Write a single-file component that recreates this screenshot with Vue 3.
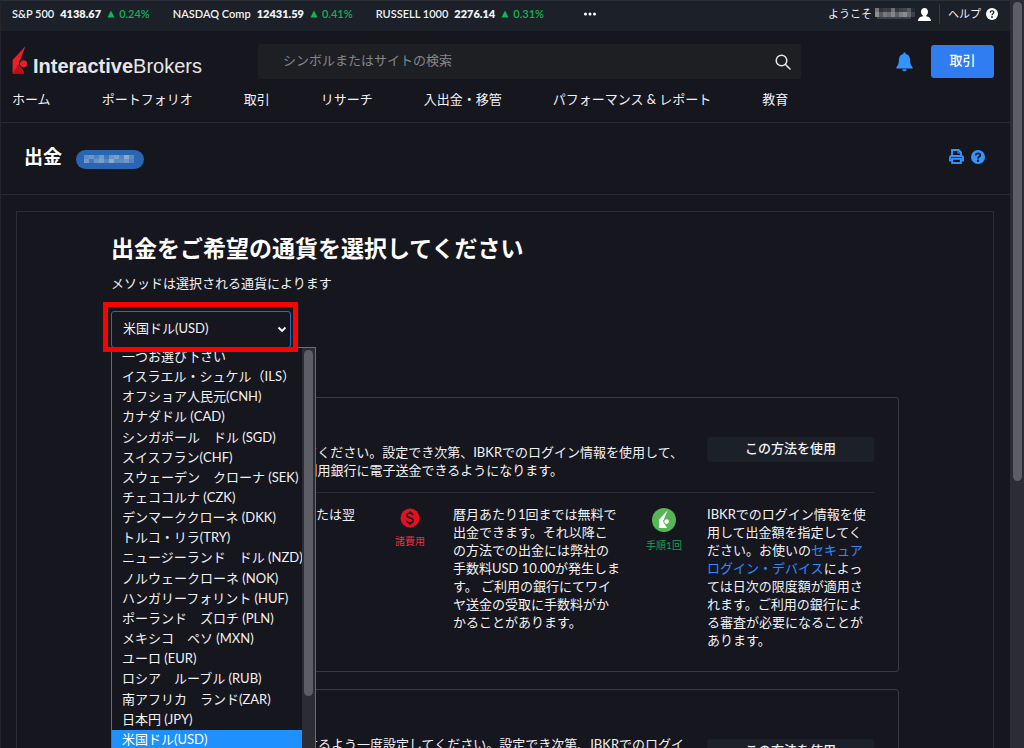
<script setup>
import { ref } from 'vue'

const tickers = [
  { name: 'S&P 500', value: '4138.67', change: '0.24%' },
  { name: 'NASDAQ Comp', value: '12431.59', change: '0.41%' },
  { name: 'RUSSELL 1000', value: '2276.14', change: '0.31%' },
]

const menu = ['ホーム', 'ポートフォリオ', '取引', 'リサーチ', '入出金・移管', 'パフォーマンス & レポート', '教育']

const currencies = [
  '一つお選び下さい',
  'イスラエル・シュケル（ILS）',
  'オフショア人民元(CNH)',
  'カナダドル (CAD)',
  'シンガポール　ドル (SGD)',
  'スイスフラン(CHF)',
  'スウェーデン　クローナ (SEK)',
  'チェココルナ (CZK)',
  'デンマーククローネ (DKK)',
  'トルコ・リラ(TRY)',
  'ニュージーランド　ドル (NZD)',
  'ノルウェークローネ (NOK)',
  'ハンガリーフォリント (HUF)',
  'ポーランド　ズロチ (PLN)',
  'メキシコ　ペソ (MXN)',
  'ユーロ (EUR)',
  'ロシア　ルーブル (RUB)',
  '南アフリカ　ランド(ZAR)',
  '日本円 (JPY)',
  '米国ドル(USD)',
]

const selected = ref('米国ドル(USD)')

const nameShades = ['#8d8d8f', '#55585e', '#77787c', '#6a6c72', '#84868a', '#5c5f66', '#7d7e83', '#8a8b90', '#666970', '#3c4048']
const pillShades = ['#5d8cc6', '#6f97c9', '#4f82c2', '#7398c6', '#3f77bd', '#6a93c8', '#7e9fc8', '#5686c3', '#8ea9cb', '#6089c0']
</script>

<template>
  <div class="page">
    <div class="content">
      <div class="topbar">
        <div class="tickers">
          <div v-for="t in tickers" :key="t.name" class="ticker">
            <span>{{ t.name }}</span>
            <b>{{ t.value }}</b>
            <span class="up">
              <svg width="8" height="8" viewBox="0 0 8 8" aria-hidden="true"><path d="M4 0.5 L7.6 7.5 H0.4 Z" fill="#12b455" /></svg>
              {{ t.change }}
            </span>
          </div>
          <button class="plain more" aria-label="その他">
            <svg width="14" height="4" viewBox="0 0 14 4"><g fill="#fff"><circle cx="2.5" cy="2" r="1.5" /><circle cx="7" cy="2" r="1.5" /><circle cx="11.5" cy="2" r="1.5" /></g></svg>
          </button>
        </div>
        <div class="user">
          <button class="plain welcome">
            <span>ようこそ</span>
            <svg width="40" height="12" viewBox="0 0 40 12" aria-hidden="true">
              <rect v-for="(c, i) in nameShades" :key="i" :x="i * 4" y="4" width="4" height="5" :fill="c" />
              <rect v-for="(c, i) in nameShades" :key="'t' + i" :x="i * 4" y="0" width="4" height="4" :fill="c" :opacity="i % 4 === 0 ? 0.8 : 0.35" />
              <rect x="2" y="9" width="34" height="2" fill="#3c4048" />
            </svg>
            <svg width="13" height="13" viewBox="0 0 13 13" aria-hidden="true"><path fill="#fff" d="M6.5 0 C8.6 0 10 1.6 10 3.7 C10 5.3 9.2 6.8 8.1 7.5 V8.3 C10.6 8.8 12.8 9.8 13 13 H0 C0.2 9.8 2.4 8.8 4.9 8.3 V7.5 C3.8 6.8 3 5.3 3 3.7 C3 1.6 4.4 0 6.5 0 Z" /></svg>
          </button>
          <a class="help" href="#">
            <span>ヘルプ</span>
            <svg width="12" height="12" viewBox="0 0 12 12" aria-hidden="true"><circle cx="6" cy="6" r="6" fill="#fff" /><path d="M4.2 4.6 C4.3 2.3 7.9 2.4 7.8 4.5 C7.7 5.7 6.1 5.7 6 7.2" fill="none" stroke="#1b2029" stroke-width="1.3" /><circle cx="6" cy="9" r="0.9" fill="#1b2029" /></svg>
          </a>
        </div>
      </div>

      <header class="header">
        <div class="head-row">
          <a class="logo" href="#" aria-label="InteractiveBrokers">
            <svg width="16" height="28" viewBox="0 0 16 28" aria-hidden="true">
              <path d="M13.5 0 L0.6 14 V27.5 H12.4 L7 17 Z" fill="#e8202c" />
              <path d="M0.6 27.5 L7 17 L12.4 27.5 Z" fill="#bd0f1a" />
              <circle cx="11.6" cy="17.8" r="4.6" fill="#16161e" />
              <circle cx="11.6" cy="17.8" r="3.5" fill="#e8202c" />
            </svg>
            <span><b>Interactive</b>Brokers</span>
          </a>
          <form class="search" role="search" @submit.prevent>
            <input type="text" aria-label="シンボルまたはサイトの検索" placeholder="シンボルまたはサイトの検索" />
            <button class="plain" aria-label="検索">
              <svg width="16" height="16" viewBox="0 0 16 16"><circle cx="6.5" cy="6.5" r="5.3" fill="none" stroke="#e4e4e6" stroke-width="1.5" /><path d="M10.5 10.5 L15 15" stroke="#e4e4e6" stroke-width="1.6" stroke-linecap="round" /></svg>
            </button>
          </form>
          <div class="actions">
            <button class="plain bell" aria-label="通知">
              <svg width="17" height="20" viewBox="0 0 17 20"><path fill="#3394ff" d="M8.5 0.5 C9.3 0.5 9.7 1 9.7 1.9 C12.8 2.6 14 4.8 14.1 8 C14.2 11.6 14.8 13.4 16.6 15.3 V16.4 H0.4 V15.3 C2.2 13.4 2.8 11.6 2.9 8 C3 4.8 4.2 2.6 7.3 1.9 C7.3 1 7.7 0.5 8.5 0.5 Z M6.2 17.2 H10.8 C10.6 18.6 9.7 19.3 8.5 19.3 C7.3 19.3 6.4 18.6 6.2 17.2 Z" /></svg>
            </button>
            <button class="trade">取引</button>
          </div>
        </div>
        <nav class="nav">
          <a v-for="m in menu" :key="m" href="#">{{ m }}</a>
        </nav>
      </header>

      <div class="titlebar">
        <h1>出金</h1>
        <span class="pill">
          <svg width="52" height="8" viewBox="0 0 52 8" aria-hidden="true">
            <rect v-for="(c, i) in pillShades" :key="i" :x="i * 5" y="0" width="5" height="4" :fill="c" />
            <rect v-for="(c, i) in pillShades" :key="'b' + i" :x="i * 5" y="4" width="5" height="4" :fill="pillShades[(i + 3) % 10]" />
          </svg>
        </span>
        <div class="tools">
          <button class="plain" aria-label="印刷">
            <svg width="15" height="15" viewBox="0 0 15 15"><g fill="none" stroke="#3394ff" stroke-width="1.9"><path d="M3 7 V1 H9.6 L12 3.4 V7" /><path d="M3.2 11.5 H1 V8.6 Q1 7 2.6 7 H12.4 Q14 7 14 8.6 V11.5 H11.8" /><rect x="3.2" y="9.8" width="8.6" height="4.2" /></g><path d="M9 1 V4 H12" fill="none" stroke="#3394ff" stroke-width="1.2" /></svg>
          </button>
          <button class="plain" aria-label="ヘルプ">
            <svg width="14" height="14" viewBox="0 0 14 14"><circle cx="7" cy="7" r="7" fill="#3394ff" /><path d="M4.7 5.4 C4.9 2.6 9.4 2.7 9.3 5.3 C9.2 6.9 7.1 6.8 7 8.5" fill="none" stroke="#16161e" stroke-width="1.8" /><circle cx="7" cy="10.7" r="1.2" fill="#16161e" /></svg>
          </button>
        </div>
      </div>

      <main class="panel">
        <div class="inner">
          <h2>出金をご希望の通貨を選択してください</h2>
          <label for="currency">メソッドは選択される通貨によります</label>
          <div class="picker">
            <select id="currency" v-model="selected">
              <option v-for="c in currencies" :key="c">{{ c }}</option>
            </select>
            <svg class="chevron" width="10" height="7" viewBox="0 0 10 7" aria-hidden="true"><path d="M1.5 1.5 L5 5 L8.5 1.5" fill="none" stroke="#fff" stroke-width="1.8" /></svg>
            <div class="popup">
              <ul role="listbox" aria-label="通貨">
                <li v-for="c in currencies" :key="c" role="option" :aria-selected="c === selected" :class="{ on: c === selected }" @click="selected = c">{{ c }}</li>
              </ul>
              <div class="popup-track"><div class="popup-thumb"></div></div>
            </div>
            <div class="highlight"></div>
          </div>

          <section class="card">
            <div class="card-head">
              <p>銀行の口座情報を一度設定してください。設定でき次第、IBKRでのログイン情報を使用して、<br />弊社の取引口座からすぐにご利用銀行に電子送金できるようになります。</p>
              <button class="use">この方法を使用</button>
            </div>
            <div class="facts">
              <div class="fact">
                <div class="badge blue">
                  <svg width="20" height="20" viewBox="0 0 20 20" aria-hidden="true"><circle cx="10" cy="10" r="10" fill="#2f7df0" /><path d="M10 4 V10 L14 12" fill="none" stroke="#16161e" stroke-width="2" /></svg>
                  <span>到着</span>
                </div>
                <p>ご依頼から当日中または翌営業日の送金。</p>
              </div>
              <div class="fact">
                <div class="badge red">
                  <svg width="20" height="20" viewBox="0 0 20 20" aria-hidden="true"><circle cx="10" cy="10" r="9.5" fill="#e5101f" /><path d="M13 7 C12.5 5.6 11.4 5.1 10 5.1 C8.2 5.1 7 6 7 7.4 C7 10.6 13.2 9.2 13.2 12.5 C13.2 14 11.8 14.9 10 14.9 C8.3 14.9 7.1 14.2 6.7 12.7 M10 3.2 V5.2 M10 14.8 V16.8" fill="none" stroke="#16161e" stroke-width="1.7" /></svg>
                  <span>諸費用</span>
                </div>
                <p class="fees">暦月あたり1回までは無料で<br />出金できます。それ以降こ<br />の方法での出金には弊社の<br />手数料USD 10.00が発生しま<br />す。 ご利用の銀行にてワイ<br />ヤ送金の受取に手数料がか<br />かることがあります。</p>
              </div>
              <div class="fact">
                <div class="badge green">
                  <svg width="24" height="24" viewBox="0 0 24 24" aria-hidden="true"><circle cx="12" cy="12" r="12" fill="#56b656" /><path d="M15.6 2.2 L7.2 11.5 V20 H15 L11.2 13 Z" fill="#fff" /><circle cx="14.6" cy="13.6" r="3.1" fill="#56b656" /><circle cx="14.6" cy="13.6" r="2.3" fill="#fff" /></svg>
                  <span>手順1回</span>
                </div>
                <p>IBKRでのログイン情報を使用して出金額を指定してください。お使いの<a href="#">セキュアログイン・デバイス</a>によっては日次の限度額が適用されます。ご利用の銀行による審査が必要になることがあります。</p>
              </div>
            </div>
          </section>

          <section class="card lower">
            <div class="card-head">
              <p>お客様の銀行口座へ直接送金するよう一度設定してください。設定でき次第、IBKRでのログイ<br />ン情報を使用して電子送金できるようになります。</p>
              <button class="use">この方法を使用</button>
            </div>
          </section>
        </div>
      </main>
    </div>
    <div class="track"><div class="thumb"></div></div>
  </div>
</template>

<style>
html,
body {
  margin: 0;
  background: #16161e;
}
</style>

<style scoped>
* {
  box-sizing: border-box;
}

.page {
  display: flex;
  height: 100vh;
  overflow: hidden;
  background: #16161e;
  color: #f2f2f4;
  font-family: Lato, "Noto Sans CJK JP", sans-serif;
  font-size: 13px;
  line-height: 18px;
}

.content {
  flex: 1;
  min-width: 0;
  border-left: 1px solid #24242c;
}

button,
input,
select {
  font: inherit;
  color: inherit;
}

p,
h1,
h2,
ul {
  margin: 0;
  padding: 0;
}

a {
  color: inherit;
  text-decoration: none;
}

svg {
  display: block;
  flex: none;
}

.plain {
  display: flex;
  align-items: center;
  padding: 0;
  border: 0;
  background: none;
  cursor: pointer;
}

.topbar {
  display: flex;
  justify-content: space-between;
  height: 31px;
  padding: 0 12px 4px 11px;
  border-top: 1px solid #2a2e37;
  background: #1b2029;
}

.tickers {
  display: flex;
  align-items: center;
  gap: 23px;
  font-size: 11px;
  font-weight: 600;
}

.ticker {
  display: flex;
  gap: 6px;
  white-space: nowrap;
}

.ticker b {
  font-weight: 800;
}

.up {
  display: flex;
  align-items: center;
  gap: 4px;
  color: #12b455;
}

.more {
  margin-left: 16px;
}

.user {
  display: flex;
  align-items: center;
}

.welcome {
  gap: 3px;
  padding-right: 8px;
  font-size: 11px;
}

.help {
  display: flex;
  align-items: center;
  gap: 5px;
  height: 20px;
  padding-left: 8px;
  border-left: 1px solid #363a43;
  font-size: 11px;
}

.header {
  height: 92px;
  padding: 13px 16px 0 11px;
  border-bottom: 1px solid #2c2c34;
}

.head-row {
  display: flex;
  align-items: center;
  height: 35px;
}

.logo {
  display: flex;
  flex: none;
  align-self: flex-start;
  gap: 5px;
  width: 246px;
  color: #e6e6e8;
  font-family: "Liberation Sans", Arial, sans-serif;
  font-size: 20px;
  line-height: 44px;
}

.logo svg {
  margin-top: 2px;
}

.search {
  display: flex;
  flex: 1;
  max-width: 543px;
  height: 35px;
  padding-right: 10px;
  border-radius: 2px;
  background: #1e1f23;
}

.search input {
  flex: 1;
  min-width: 0;
  padding: 0 0 3px 25px;
  border: 0;
  outline: 0;
  background: none;
}

.search input::placeholder {
  color: #85868a;
  opacity: 1;
}

.actions {
  display: flex;
  align-items: center;
  gap: 18px;
  margin-left: auto;
}

.trade {
  width: 63px;
  height: 33px;
  padding: 0 0 3px;
  border: 0;
  border-radius: 3px;
  background: #2f7df0;
  color: #fff;
  font-weight: 500;
}

.nav {
  display: flex;
  gap: 51px;
  padding-top: 11px;
  white-space: nowrap;
}

.titlebar {
  display: flex;
  align-items: center;
  height: 72px;
  padding: 0 25px 4px 23px;
  border-bottom: 1px solid #2c2c34;
}

h1 {
  color: #fff;
  font-size: 19px;
  font-weight: 700;
  line-height: 24px;
}

.pill {
  display: flex;
  align-items: center;
  justify-content: center;
  width: 68px;
  height: 19px;
  margin: 5px 0 0 14px;
  border-radius: 10px;
  background: #2966b2;
}

.tools {
  display: flex;
  align-items: center;
  gap: 7px;
  margin-left: auto;
}

.panel {
  margin: 16px 16px 0 15px;
  padding: 22px 24px 0;
  border: 1px solid #2c2c34;
}

.inner {
  max-width: 788px;
  margin: 0 auto;
}

h2 {
  color: #fff;
  font-size: 23px;
  font-weight: 700;
  line-height: 28px;
}

label {
  display: block;
  padding-top: 12px;
}

.picker {
  position: relative;
  width: 180px;
  height: 37px;
  margin: 19px 0 49px;
}

.picker select {
  width: 100%;
  height: 37px;
  padding: 0 24px 3px 11px;
  border: 1px solid #2b6cb8;
  border-radius: 3px;
  outline: 0;
  appearance: none;
  background: #16161e;
}

.chevron {
  position: absolute;
  right: 4px;
  top: 15px;
}

.popup {
  position: absolute;
  z-index: 2;
  top: 36px;
  left: 0;
  display: flex;
  width: 205px;
  height: 420px;
  overflow: hidden;
  border: 1px solid #6a6a70;
  background: #16161e;
}

.popup ul {
  display: grid;
  flex: 1;
  grid-auto-rows: 1fr;
  min-width: 0;
  height: 403px;
  margin-top: -1px;
  list-style: none;
  white-space: nowrap;
}

.popup li {
  padding-left: 10px;
  line-height: 18px;
}

.popup li.on {
  background: #1e90ff;
  color: #fff;
}

.popup-track {
  flex: none;
  width: 13px;
  padding: 2px 2px 0;
  background: #2c2c34;
}

.popup-thumb {
  height: 346px;
  border-radius: 5px;
  background: #5d5e63;
}

.highlight {
  position: absolute;
  z-index: 3;
  inset: -9px -7px -4px -8px;
  border: 5px solid #f00;
  pointer-events: none;
}

.card {
  margin-bottom: 17px;
  padding: 39px 24px 22px;
  border: 1px solid #3b3b43;
  border-radius: 3px;
}

.card-head {
  display: flex;
  justify-content: space-between;
  padding-bottom: 13px;
  border-bottom: 1px solid #2c2c34;
}

.card-head p {
  padding-top: 6px;
  white-space: nowrap;
}

.use {
  flex: none;
  width: 167px;
  height: 25px;
  padding: 0 0 3px;
  border: 0;
  border-radius: 3px;
  background: #1b2029;
  font-weight: 500;
}

.lower .use {
  margin-top: 10px;
}

.facts {
  display: grid;
  grid-template-columns: repeat(3, minmax(0, 1fr));
  gap: 24px;
  padding-top: 12px;
}

.fact {
  display: flex;
  gap: 23px;
}

.fact p {
  flex: 1;
}

.fact .fees {
  white-space: nowrap;
}

.fact a {
  color: #2f8cff;
}

.badge {
  display: flex;
  flex: none;
  flex-direction: column;
  align-items: center;
  gap: 4px;
  width: 40px;
  padding-top: 3px;
  font-size: 10px;
  white-space: nowrap;
}

.red {
  color: #e8303c;
}

.green {
  color: #12a455;
}

.blue {
  color: #2f7df0;
}

.track {
  flex: none;
  width: 14px;
  padding: 2px 2px 0 3px;
  background: #2c2c34;
}

.thumb {
  height: 64vh;
  border-radius: 5px;
  background: #5d5e63;
}
</style>
